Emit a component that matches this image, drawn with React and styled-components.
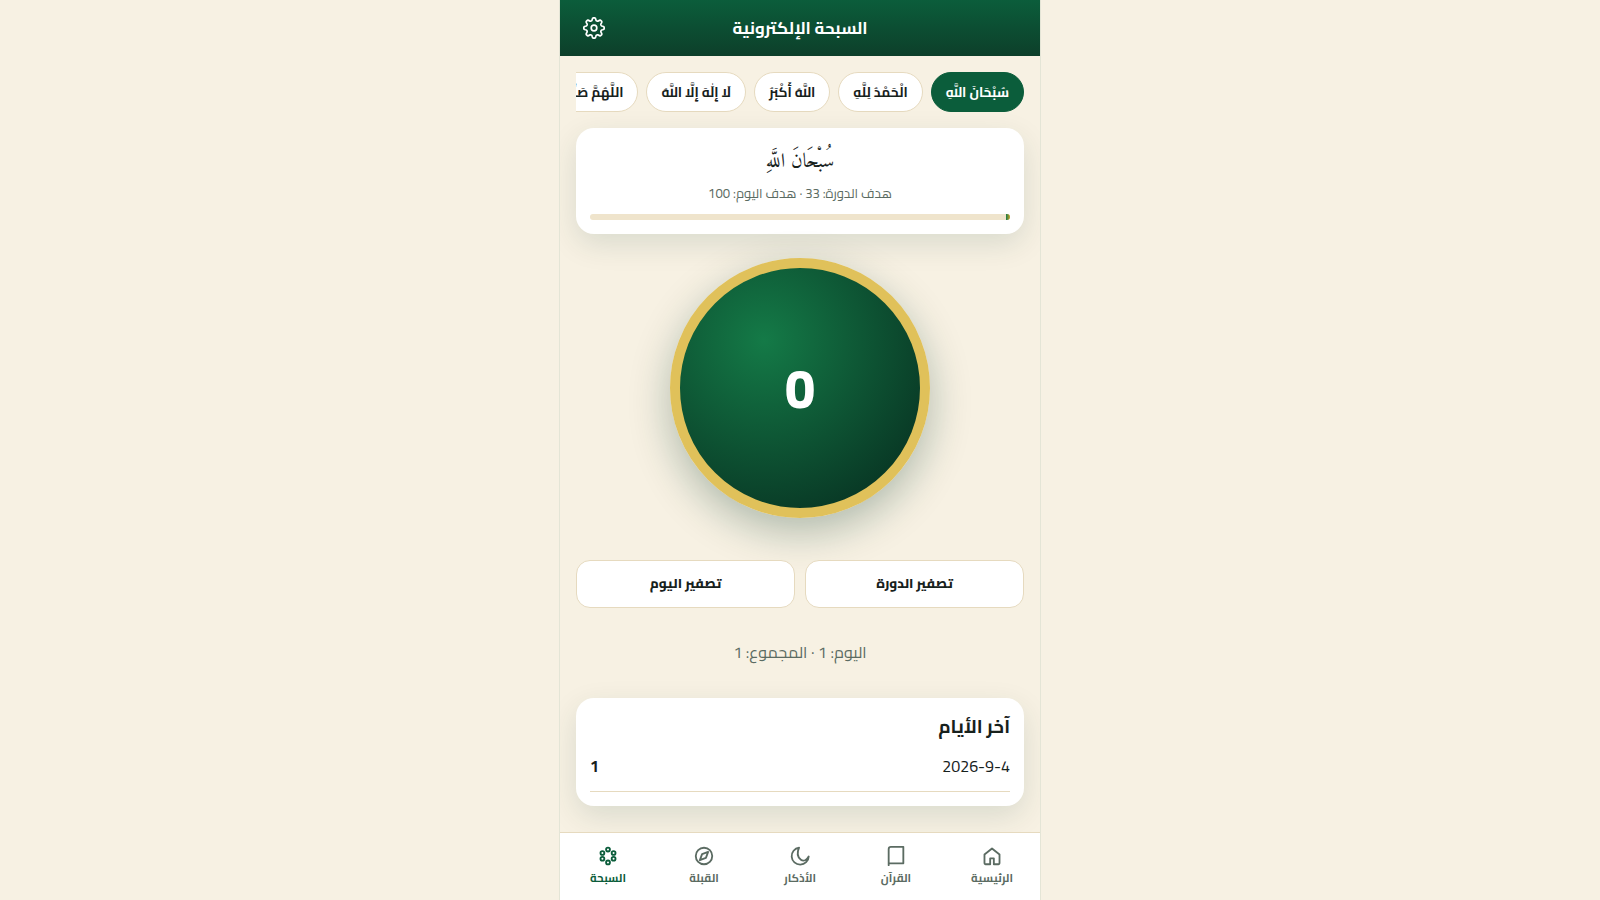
import React from "react";
import styled, { createGlobalStyle, css } from "styled-components";

const c = {
  bg: "#f7f1e3", ink: "#17211c", muted: "#5b6b62", green: "#0b5d3b",
  deep: "#0d3f2a", gold: "#e0c15a", line: "#e6dabf", sand: "#efe4cc",
};

const GlobalStyle = createGlobalStyle`
  *, *::before, *::after { box-sizing: border-box; }
  html, body { margin: 0; padding: 0; height: 100%; overflow: hidden; }
  body {
    background: ${c.bg};
    color: ${c.ink};
    font-family: Cairo, "Noto Sans", "DejaVu Sans", sans-serif;
    font-size: 16px;
    line-height: 1.6;
  }
  button { font-family: inherit; color: inherit; cursor: pointer; }
`;

const Shell = styled.div`
  width: 480px;
  height: 900px;
  margin: 0 auto;
  display: flex;
  flex-direction: column;
  overflow: hidden;
  box-shadow: 0 0 0 1px rgba(11, 93, 59, 0.08);
`;

const Header = styled.header`
  flex: none;
  height: 56px;
  padding: 0 16px;
  display: grid;
  grid-template-columns: 36px 1fr 36px;
  align-items: center;
  color: #fff;
  background: linear-gradient(180deg, ${c.green}, ${c.deep});
`;

const Title = styled.h1`
  grid-column: 2;
  margin: 0;
  text-align: center;
  font-size: 16.8px;
  font-weight: 700;
`;

const IconButton = styled.button`
  width: 36px;
  height: 36px;
  padding: 0;
  border: 0;
  background: none;
  display: grid;
  place-items: center;
  && { color: #fff; }
`;

const Main = styled.main`
  flex: 1;
  min-height: 0;
  padding: 16px 16px 0;
  display: flex;
  flex-direction: column;
`;

const Chips = styled.div`
  flex: none;
  display: flex;
  gap: 8px;
  overflow: hidden;
  margin-bottom: 16px;
`;

const Chip = styled.button`
  flex: none;
  height: 40px;
  padding: 0 14px;
  border-radius: 20px;
  border: 1px solid ${c.line};
  background: #fff;
  font-size: 13.6px;
  font-weight: 700;
  white-space: nowrap;
  ${(p) => p.$active && css`
    && { color: #fff; }
    background: ${c.green};
    border-color: ${c.green};
  `}
`;

const Card = styled.section`
  flex: none;
  border-radius: 18px;
  background: #fff;
  padding: 14px;
  box-shadow: 0 10px 30px rgba(11, 61, 46, 0.12);
`;

const DhikrCard = styled(Card)`
  height: 106px;
  text-align: center;
`;

const Dhikr = styled.div`
  height: 38px;
  line-height: 40px;
  font-family: Amiri, "DejaVu Sans", serif;
  font-size: 20.2px;
`;

const Goal = styled.div`
  height: 26px;
  line-height: 26px;
  font-size: 13.12px;
  color: ${c.muted};
`;

const Track = styled.div`
  height: 6px;
  margin-top: 8px;
  border-radius: 3px;
  background: ${c.sand};
  overflow: hidden;
`;

const Fill = styled.div`
  height: 100%;
  background: linear-gradient(90deg, #157a47, #c9a227);
`;

const Counter = styled.button`
  flex: none;
  align-self: center;
  width: 260px;
  height: 260px;
  margin: 24px 0 42px;
  padding: 0;
  border-radius: 50%;
  border: 10px solid ${c.gold};
  background: radial-gradient(circle at 35% 30%, #147a47, #093a26 78%);
  background-origin: padding-box;
  box-shadow: 0 14px 40px rgba(11, 61, 46, 0.3);
  && { color: #fff; }
  font-size: 54.4px;
  font-weight: 800;
  line-height: 1;
`;

const Actions = styled.div`
  flex: none;
  display: grid;
  grid-template-columns: 1fr 1fr;
  gap: 10px;
`;

const Action = styled.button`
  height: 48px;
  padding: 0 0 2px;
  border-radius: 14px;
  border: 1px solid ${c.line};
  background: #fff;
  font-size: 13.333px;
  font-weight: 800;
`;

const Totals = styled.p`
  flex: none;
  height: 90px;
  margin: 0;
  line-height: 88px;
  text-align: center;
  color: ${c.muted};
`;

const HistoryCard = styled(Card)`
  height: 108px;
`;

const HistoryTitle = styled.h2`
  margin: 0;
  font-size: 18.72px;
  line-height: 30px;
  font-weight: 700;
`;

const HistoryRow = styled.div`
  display: flex;
  align-items: center;
  justify-content: space-between;
  height: 50px;
  border-bottom: 1px solid ${c.line};
`;

const Nav = styled.nav`
  flex: none;
  height: 68px;
  display: grid;
  grid-template-columns: repeat(5, 1fr);
  border-top: 1px solid ${c.line};
  background: #fff;
  position: relative;
`;

const NavItem = styled.a`
  padding-top: 12px;
  display: flex;
  flex-direction: column;
  align-items: center;
  gap: 2px;
  font-size: 11.36px;
  line-height: 18px;
  font-weight: 700;
  color: ${(p) => (p.$active ? c.green : c.muted)};
`;

const Glyph = styled.svg.attrs({ viewBox: "0 0 24 24", fill: "none", stroke: "currentColor" })`
  display: block;
  width: ${(p) => p.$size || 22}px;
  height: ${(p) => p.$size || 22}px;
  stroke-width: ${(p) => p.$stroke || 2};
  stroke-linejoin: round;
  stroke-linecap: round;
`;

const gear = (() => {
  const pts = [];
  for (let i = 0; i < 96; i++) {
    const a = (i / 96) * Math.PI * 2;
    const wave = Math.tanh(2 * Math.cos(8 * a)) / Math.tanh(2);
    const r = 8.9 + 1.3 * wave;
    pts.push(`${(12 + r * Math.sin(a)).toFixed(2)} ${(12 - r * Math.cos(a)).toFixed(2)}`);
  }
  return `M${pts.join("L")}Z`;
})();

const GearIcon = () => <Glyph $size={24} $stroke={1.7}><circle cx="12" cy="12" r="2.8" /><path d={gear} /></Glyph>;
const HomeIcon = () => <Glyph><path d="M3.8 10.300 12 3.800l8.200 6.500V20a1 1 0 0 1-1 1H14v-6.500h-4V21H4.800a1 1 0 0 1-1-1z" /></Glyph>;
const BookIcon = () => <Glyph><path d="M4 22V4.500A2.500 2.500 0 0 1 6.500 2H20v18H4.500" /></Glyph>;
const MoonIcon = () => <Glyph><path d="M21.500 12.500A9.300 9.300 0 1 1 11 2.900C8.500 8.500 9.500 13.500 13 16.100 16 18.300 19.500 16.500 21.500 12.500z" /></Glyph>;
const CompassIcon = () => <Glyph><circle cx="12" cy="12" r="9" /><path d="m16.500 7.500-2.400 6.600-6.600 2.400 2.400-6.600z" /></Glyph>;
const BeadsIcon = () => (
  <Glyph>
    {[[12, 5], [18.1, 8.7], [18.1, 15], [12, 19], [5.9, 15], [5.9, 8.7]].map(([x, y]) => (
      <circle key={x + "-" + y} cx={x} cy={y} r="2.100" />
    ))}
  </Glyph>
);

const chips = ["سُبْحَانَ اللَّهِ", "الْحَمْدُ لِلَّهِ", "اللَّهُ أَكْبَرُ", "لَا إِلَٰهَ إِلَّا اللَّهُ", "اللَّهُمَّ صَلِّ عَلَى مُحَمَّدٍ"];
const tabs = [
  ["الرئيسية", HomeIcon],
  ["القرآن", BookIcon],
  ["الأذكار", MoonIcon],
  ["القبلة", CompassIcon],
  ["السبحة", BeadsIcon],
];

export default function App() {
  return (
    <Shell dir="rtl" lang="ar">
      <GlobalStyle />
      <Header>
        <Title>السبحة الإلكترونية</Title>
        <IconButton><GearIcon /></IconButton>
      </Header>
      <Main>
        <Chips>{chips.map((t, i) => <Chip key={t} $active={i === 0}>{t}</Chip>)}</Chips>
        <DhikrCard>
          <Dhikr>سُبْحَانَ اللَّهِ</Dhikr>
          <Goal>هدف الدورة: 33 · هدف اليوم: 100</Goal>
          <Track><Fill style={{ width: "1%" }} /></Track>
        </DhikrCard>
        <Counter>0</Counter>
        <Actions>
          <Action>تصفير الدورة</Action>
          <Action>تصفير اليوم</Action>
        </Actions>
        <Totals>اليوم: 1 · المجموع: 1</Totals>
        <HistoryCard>
          <HistoryTitle>آخر الأيام</HistoryTitle>
          <HistoryRow><span dir="ltr">2026-9-4</span><strong>1</strong></HistoryRow>
        </HistoryCard>
      </Main>
      <Nav>
        {tabs.map(([label, Icon], i) => (
          <NavItem key={label} $active={i === 4}><Icon />{label}</NavItem>
        ))}
      </Nav>
    </Shell>
  );
}
